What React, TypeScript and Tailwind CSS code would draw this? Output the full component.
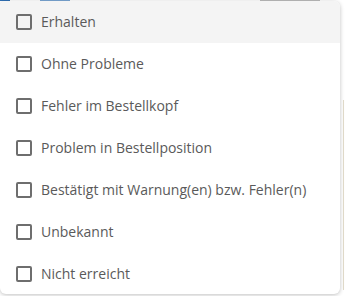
import React from "react";

const items = [
  "Erhalten",
  "Ohne Probleme",
  "Fehler im Bestellkopf",
  "Problem in Bestellposition",
  "Bestätigt mit Warnung(en) bzw. Fehler(n)",
  "Unbekannt",
  "Nicht erreicht",
];

export default function App() {
  return (
    <div className="relative w-[345px] h-[296px] bg-white overflow-hidden" style={{ fontFamily: '"Open Sans", sans-serif' }}>
      <div className="absolute left-0 top-0 w-[345px] h-[2px] flex">
        <div className="w-[10px] h-[1px] bg-[#2f6fb3]" />
        <div className="ml-[30px] w-[30px] h-[1px] bg-[#7aa6d4]" />
        <div className="ml-[190px] w-[60px] h-[1px] bg-[#bbbbbb]" />
      </div>
      <div className="absolute right-[1px] top-[100px] w-[1px] h-[190px] bg-[#e2dccb]" />
      <div className="absolute left-0 top-[1px] w-[340px] h-[293px] bg-white rounded-[6px] shadow-[0_1px_4px_rgba(0,0,0,0.25)] overflow-hidden flex flex-col">
        {items.map((t, i) => (
          <div
            key={t}
            className={`h-[42px] shrink-0 flex items-center pl-[16px] gap-[9px] ${i === 0 ? "bg-[#f4f4f4]" : ""}`}
          >
            <div className="w-[16px] h-[16px] border-2 border-[#6e6e6e] rounded-[2px] shrink-0" />
            <span className="text-[14px] text-[#5a5a5a] leading-none">{t}</span>
          </div>
        ))}
      </div>
    </div>
  );
}
